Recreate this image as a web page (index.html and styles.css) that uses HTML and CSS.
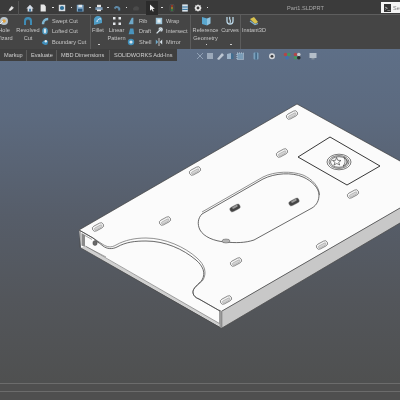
FILE: index.html
```html
<!DOCTYPE html>
<html lang="en">
<head>
<meta charset="utf-8">
<title>Part1.SLDPRT</title>
<link rel="stylesheet" href="styles.css">
</head>
<body>
<div class="app">
  <header class="topbar">
    <div class="quick">
      <svg class="qi pin" viewBox="0 0 10 10"><path d="M3 7 L6 3 L8 5 L4.5 8 Z M2 9 L4 7" fill="#e8e8e8" stroke="#e8e8e8"/></svg>
      <span class="qsep"></span>
      <svg class="qi home" viewBox="0 0 10 10"><path d="M5 1 L9.5 5.5 H8 V9.5 H2 V5.5 H.5 Z" fill="#d5dce6"/><rect x="4" y="6" width="2" height="3.5" fill="#2f6f9c"/></svg>
      <svg class="qi new" viewBox="0 0 10 10"><path d="M2 .5 H6.5 L8.5 3 V9.5 H2 Z" fill="#e6e6e6"/></svg>
      <i class="dot d1"></i>
      <svg class="qi open" viewBox="0 0 10 10"><rect x="1" y="1" width="8" height="8" fill="#d8dde2"/><circle cx="5" cy="5" r="2.6" fill="#2d6f98"/></svg>
      <i class="dot d2"></i>
      <svg class="qi save" viewBox="0 0 10 10"><rect x="1" y="1" width="8.5" height="8.5" fill="#7fa6c6"/><rect x="3" y="1" width="4.5" height="3" fill="#dfe6ec"/><rect x="2.5" y="6" width="5.5" height="3.5" fill="#2b5578"/></svg>
      <i class="dot d3"></i>
      <svg class="qi print" viewBox="0 0 10 10"><rect x="2.5" y="1" width="5" height="3" fill="#e4e4e4"/><rect x=".5" y="4" width="9" height="3.5" fill="#7d9cb8"/><rect x="2.5" y="7" width="5" height="2" fill="#e4e4e4"/></svg>
      <i class="dot d4"></i>
      <svg class="qi undo" viewBox="0 0 10 10"><path d="M1 5 C3 1 7 2 9 5 V8 H6.5 V6 C5 4.5 3.5 5 3 6.5 Z" fill="#5f8aa8"/></svg>
      <i class="dot d5"></i>
      <svg class="qi redo" viewBox="0 0 10 10"><path d="M1 6 C3 2 7 2 9 5 L8 8 H2 Z" fill="#4b4b4b"/></svg>
      <span class="sel"><svg class="qi cursor" viewBox="0 0 10 10"><path d="M2.5 .5 V8.5 L4.5 6.6 L6 9.5 L7.2 9 L5.8 6.2 L8.5 6 Z" fill="#f0f0f0"/></svg></span>
      <i class="dot d6"></i>
      <svg class="qi light" viewBox="0 0 10 10"><rect x="2.8" y=".5" width="4.4" height="9" rx="1.5" fill="#222" stroke="#888" stroke-width=".5"/><circle cx="5" cy="2.5" r="1.1" fill="#c8402c"/><circle cx="5" cy="5" r="1.1" fill="#c8a030"/><circle cx="5" cy="7.5" r="1.1" fill="#3fa050"/></svg>
      <svg class="qi props" viewBox="0 0 10 10"><rect x="1.5" y=".5" width="7" height="9" fill="#d8e2ea"/><rect x="1.5" y="3" width="7" height="1.5" fill="#3b7aa5"/><rect x="1.5" y="6" width="7" height="1.5" fill="#3b7aa5"/></svg>
      <svg class="qi gear" viewBox="0 0 10 10"><circle cx="5" cy="5" r="2.8" fill="none" stroke="#ededed" stroke-width="2"/><path d="M5 .5 V2 M5 8 V9.5 M.5 5 H2 M8 5 H9.5 M1.8 1.8 L3 3 M7 7 L8.2 8.2 M8.2 1.8 L7 3 M3 7 L1.8 8.2" stroke="#ededed"/></svg>
      <i class="dot d7"></i>
    </div>
    <div class="title">Part1.SLDPRT</div>
    <div class="search"><span class="sicon">&gt;_</span><span class="stext">Se</span></div>
  </header>

  <section class="ribbon">
    <div class="group group-a">
      <div class="col col-hole">
        <svg class="big" viewBox="0 0 10 10"><circle cx="5" cy="5" r="4" fill="#b9c4cc"/><circle cx="5" cy="5" r="1.8" fill="#e0a23c"/><path d="M1 8 L4 5" stroke="#eee"/></svg>
        <span>Hole<br>Wizard</span>
      </div>
      <div class="col col-rev">
        <svg class="big" viewBox="0 0 10 10"><path d="M1 9 V5 A4 4 0 0 1 9 5 V9 H7 V5.5 A2 2 0 0 0 3 5.5 V9 Z" fill="#3f8cb5"/></svg>
        <span>Revolved<br>Cut</span>
      </div>
      <div class="stack stack-cut">
        <div class="row"><svg class="sm" viewBox="0 0 10 10"><path d="M1 9 C1 5 4 1 9 1 V4 C6 4 4 6 4 9 Z" fill="#7fb6d2"/></svg><span>Swept Cut</span></div>
        <div class="row"><svg class="sm" viewBox="0 0 10 10"><ellipse cx="5" cy="5" rx="3.5" ry="4.5" fill="#4e9ac2"/><ellipse cx="5" cy="5" rx="1.5" ry="3" fill="#d9e6ee"/></svg><span>Lofted Cut</span></div>
        <div class="row"><svg class="sm" viewBox="0 0 10 10"><path d="M1 6 C3 2 7 2 9 4 L8 8 C6 9 3 9 1 6 Z" fill="#3e8fbd"/><circle cx="6" cy="4" r="1.5" fill="#e6eef3"/></svg><span>Boundary Cut</span></div>
      </div>
    </div>
    <div class="group group-b">
      <div class="col col-fillet">
        <svg class="big" viewBox="0 0 10 10"><path d="M1 9 V5 A4 4 0 0 1 9 3 V7 Z" fill="#4f9cc4"/><path d="M4 6 A3 3 0 0 1 8 3" stroke="#eef" fill="none"/></svg>
        <span>Fillet</span>
        <i class="caret"></i>
      </div>
      <div class="col col-pattern">
        <svg class="big" viewBox="0 0 10 10"><g fill="#e4e8ec"><rect x="1" y="1" width="2.5" height="2.5"/><rect x="6.5" y="1" width="2.5" height="2.5"/><rect x="1" y="6.5" width="2.5" height="2.5"/><rect x="6.5" y="6.5" width="2.5" height="2.5"/></g></svg>
        <span>Linear<br>Pattern</span>
      </div>
      <div class="stack stack-rib">
        <div class="row"><svg class="sm" viewBox="0 0 10 10"><path d="M2 9 L6 1 H8 V9 Z" fill="#6fa8c8"/></svg><span>Rib</span></div>
        <div class="row"><svg class="sm" viewBox="0 0 10 10"><path d="M2 9 L4 2 H8 L9 9 Z" fill="#4a94bd"/></svg><span>Draft</span></div>
        <div class="row"><svg class="sm" viewBox="0 0 10 10"><circle cx="5" cy="5" r="4" fill="#3f8fba"/><circle cx="5" cy="5" r="2" fill="#d7e6ee"/></svg><span>Shell</span></div>
      </div>
      <div class="stack stack-wrap">
        <div class="row"><svg class="sm" viewBox="0 0 10 10"><rect x="1" y="1" width="8" height="8" fill="#9ec4d8"/><rect x="3" y="3" width="4" height="4" fill="#e6eef2"/></svg><span>Wrap</span></div>
        <div class="row"><svg class="sm" viewBox="0 0 10 10"><path d="M2 8 L5 5 L8 2 M5 3 A2 2 0 1 1 7 5" stroke="#d8e4ec" stroke-width="1.6" fill="none"/></svg><span>Intersect</span></div>
        <div class="row"><svg class="sm" viewBox="0 0 10 10"><path d="M5 0 V10" stroke="#ddd"/><path d="M1 2 L4 5 L1 8 Z" fill="#6fa8c8"/><path d="M9 2 L6 5 L9 8 Z" fill="#d8e4ec"/></svg><span>Mirror</span></div>
      </div>
    </div>
    <div class="group group-c">
      <div class="col col-ref">
        <svg class="big" viewBox="0 0 10 10"><path d="M1 1 L6 2.5 V9.5 L1 8 Z" fill="#5aa7cf"/><path d="M6 2.5 L9.5 1 V7.5 L6 9.5 Z" fill="#8fc3df"/></svg>
        <span>Reference<br>Geometry</span>
        <i class="caret"></i>
      </div>
      <div class="col col-curves">
        <svg class="big" viewBox="0 0 10 10"><path d="M2 1 V5 C2 9 8 9 8 5 V1 M5 1 C3 3 7 4 5 7" fill="none" stroke="#bcd8e8" stroke-width="1.3"/></svg>
        <span>Curves</span>
        <i class="caret"></i>
      </div>
    </div>
    <div class="group group-d">
      <div class="col col-i3d">
        <svg class="big" viewBox="0 0 10 10"><path d="M1 3 L5 1 L9 6 L6 8 Z" fill="#d8c24e"/><path d="M1 5 L6 8.5 L9 7.5" stroke="#7fb0cf" fill="none" stroke-width="1.2"/></svg>
        <span>Instant3D</span>
      </div>
    </div>
  </section>

  <main class="stage">
    <nav class="tabrow">
      <div class="tabs">
        <span class="tab tab-1">Markup</span>
        <span class="tab tab-2">Evaluate</span>
        <span class="tab tab-3">MBD Dimensions</span>
        <span class="tab tab-4">SOLIDWORKS Add-Ins</span>
      </div>
      <div class="viewtools">
        <svg class="vi v1" viewBox="0 0 8 8"><path d="M1 1 L7 7 M7 1 L1 7" stroke="#99a9bc"/></svg>
        <svg class="vi" viewBox="0 0 8 8"><rect x="1" y="1" width="6" height="6" fill="#a6b4c4"/></svg>
        <svg class="vi" viewBox="0 0 8 8"><path d="M1 7 L6 1 L8 3 L3 8 Z" fill="#cdd6e0"/></svg>
        <svg class="vi" viewBox="0 0 8 8"><path d="M1 2 L5 1 V7 L1 7 Z" fill="#a9c0d4"/><path d="M5 1 L7.5 2 V7 L5 7 Z" fill="#3d6f93"/></svg>
        <svg class="vi" viewBox="0 0 8 8"><rect x="1" y="1" width="6.5" height="6.5" fill="#7fa5c0" stroke="#cfdbe6" stroke-dasharray="1 1"/></svg>
        <svg class="vi v6" viewBox="0 0 8 8"><rect x="1.5" y=".5" width="5" height="7" rx="1" fill="#7fa9c6"/><rect x="3.5" y=".5" width="1.2" height="7" fill="#27516f"/></svg>
        <svg class="vi v7" viewBox="0 0 8 8"><circle cx="4" cy="4.3" r="3" fill="#e8e8e8"/><circle cx="4" cy="4.3" r="1.4" fill="#333"/></svg>
        <svg class="vi v8" viewBox="0 0 8 8"><circle cx="2.5" cy="2.5" r="1.8" fill="#c04040"/><circle cx="5.8" cy="2.5" r="1.8" fill="#3f9c58"/><circle cx="4" cy="5.8" r="1.8" fill="#3a72b8"/></svg>
        <svg class="vi v9" viewBox="0 0 8 8"><circle cx="2.5" cy="2.5" r="1.8" fill="#c04040"/><circle cx="5.8" cy="2.5" r="1.8" fill="#d9d9d9"/><circle cx="2.5" cy="5.8" r="1.8" fill="#3f9c58"/><circle cx="5.8" cy="5.8" r="1.8" fill="#222"/></svg>
        <svg class="vi v10" viewBox="0 0 8 8"><rect x=".5" y="1" width="7" height="5" fill="#c4ccd4"/><rect x="2.5" y="6" width="3" height="1.5" fill="#8a95a0"/></svg>
      </div>
    </nav>
    <svg class="model" viewBox="0 62 400 321">
      <defs>
        <g id="slot">
          <rect x="-6" y="-2.700" width="12" height="5.400" rx="2.700" fill="#f4f4f4" stroke="#555" stroke-width=".6"/>
          <rect x="-4.200" y="-.6" width="8.400" height="2.400" rx="1.200" fill="#d4d4d4" stroke="#888" stroke-width=".4"/>
        </g>
        <g id="hole">
          <rect x="-5.500" y="-2.500" width="11" height="5" rx="2.500" fill="#454545" stroke="#777" stroke-width=".4"/>
          <rect x="-2.500" y="-2" width="6" height="2" rx="1" fill="#9a9a9a"/>
        </g>
      </defs>

      <path class="plate" d="M79 230 L297 104 L400 161 V208 L222 311 L222 328 L81 248 Z"/>
      <path class="edge-light" d="M79 230 L297 104 L400 161"/>
      <path class="side" d="M222 311 L400 208 V223 L222 328 Z"/>
      <path class="edge" d="M222 311 L400 208"/>
      <path class="edge" d="M222 328 L400 223"/>
      <path class="post" d="M219.500 310 L222 311.500 V328 L219.500 326.500 Z"/>

      <path class="inner" d="M81.500 233 L85 235 V247 L81.500 245.500 Z"/>
      <path class="thin" d="M85 235.500 L92 239.500 M85 246 L106 257"/>
      <path class="edge" d="M80 231 V247.500"/>
      <path class="strip" d="M81 247.500 L222 328 L219.500 326 V323.500 L85 246.500 Z"/>
      <path class="thin" d="M86 246.500 L219.500 323.500"/>
      <path class="edge" d="M81 248 L220 327.500"/>
      <ellipse class="screw" cx="95" cy="243" rx="2.200" ry="2.500"/>
      <path class="thin" d="M95 241 L99 243"/>

      <path class="cutband" d="M79 230 L93 238 L103 244.500 C107 247 111 248 116 245 C125 240 135 238 146 238 C165 238 185 247 197 258 C205 265 207 273 203 280 C200 284 192 288 193 293 C193.500 296 196 298 199 299 L220 311"/>
      <path class="cutline" d="M79 230 L93 238 L103 246 C107 249 112 249.500 117 247 C126 242 135 241 146 241 C165 241 183 249 196 260 C203 266 206 273 202 280 C199 284 192 288 193 293 C193.500 296 196 298 199 299 L220 311"/>

      <path class="oband" d="M202 212 L263 177 C275 171 292 171 303 175 C312 179 319 186 319.500 195"/>
      <path class="oline" d="M202 214 L263 179 C275 173 292 172 303 177 C312 181 319 188 319 195 C319 200 317 205 312 208 L254 240 C245 243 236 243 225 242 C214 241 204 237 200 230 C197 224 198 218 202 214 Z"/>
      <ellipse class="half" cx="226" cy="241" rx="4" ry="2"/>

      <use href="#slot" transform="translate(292 115) rotate(-28)"/>
      <use href="#slot" transform="translate(282 153) rotate(-28)"/>
      <use href="#slot" transform="translate(353 194) rotate(-28)"/>
      <use href="#slot" transform="translate(195 171) rotate(-28)"/>
      <use href="#slot" transform="translate(165 221) rotate(-28)"/>
      <use href="#slot" transform="translate(98 227) rotate(-28)"/>
      <use href="#slot" transform="translate(322 245) rotate(-28)"/>
      <use href="#slot" transform="translate(236 262) rotate(-28)"/>
      <use href="#slot" transform="translate(226 300) rotate(-28)"/>
      <use href="#hole" transform="translate(235 208) rotate(-28)"/>
      <use href="#hole" transform="translate(294 202) rotate(-28)"/>

      <path class="pocket" d="M330 137 L380 166 L347 185 L298 157 Z"/>
      <g class="emblem">
        <ellipse cx="339" cy="162" rx="12" ry="7.800"/>
        <ellipse cx="339" cy="162" rx="10" ry="6.400"/>
        <ellipse cx="339" cy="162" rx="8.500" ry="5.300"/>
        <path d="M336.500 157.500 L337.800 160.300 L341 160.500 L338.700 162.300 L339.700 165 L336.800 163.500 L334 165 L335 162.300 L332.500 160.500 L335.500 160.300 Z"/>
        <path d="M344 157.500 C348 160 348 164 343 166 C345.500 163.500 345.500 160 344 157.500 Z"/>
      </g>
    </svg>
  </main>

  <footer class="status"><div class="strip1"></div><div class="strip2"></div></footer>
</div>
</body>
</html>
```
FILE: styles.css
```css
* { box-sizing: border-box; }
html, body { margin: 0; height: 100%; }
body { background: #4f4f4f; font-family: "Liberation Sans", Arimo, sans-serif; color: #c6c6c6; overflow: hidden; }
.app { width: 400px; height: 400px; display: flex; flex-direction: column; filter: blur(.35px); }

.topbar { height: 15px; flex: none; display: flex; align-items: center; background: #3b3b3b; border-bottom: 1px solid #5e5e5e; padding-top: 1px; }
.quick { display: flex; align-items: center; height: 14px; padding-left: 7px; }
.qi { width: 8px; height: 8px; flex: none; display: block; }
.qsep { width: 1px; height: 14px; background: #555; margin: 0 0 0 3px; }
.home { margin-left: 7px; }
.new { margin-left: 5px; }
.dot { width: 1.5px; height: 1.5px; background: #ddd; flex: none; display: block; }
.d1 { margin-left: 5px; }
.open { margin-left: 4px; }
.d2 { margin-left: 5px; }
.save { margin-left: 4px; }
.d3 { margin-left: 5px; }
.print { margin-left: 4.500px; }
.d4 { margin-left: 4px; }
.undo { margin-left: 4px; }
.d5 { margin-left: 5px; }
.redo { margin-left: 5px; }
.sel { width: 12px; height: 14px; margin-left: 6px; background: #2b2b2b; display: flex; align-items: center; justify-content: center; }
.d6 { margin-left: 3px; }
.light { margin-left: 5px; }
.props { margin-left: 5px; }
.gear { margin-left: 5px; }
.d7 { margin-left: 5px; }
.title { flex: 1; text-align: center; font-size: 5.600px; color: #a8a8a8; padding-left: 22px; }
.search { width: 19px; height: 11px; background: #f4f4f4; display: flex; align-items: center; gap: 2px; padding-left: 3px; flex: none; overflow: hidden; font-size: 5.500px; }
.sicon { width: 7px; height: 8px; background: #333; color: #eee; font-size: 5px; line-height: 8px; text-align: center; flex: none; }
.stext { color: #777; }

.ribbon { height: 34px; flex: none; display: flex; background: #454545; overflow: hidden; font-size: 5.600px; line-height: 8px; }
.group { display: flex; height: 100%; border-right: 1px solid #5c5c5c; flex: none; position: relative; }
.group-a { margin-left: -9px; width: 100px; }
.group-b { width: 100px; }
.group-c { width: 50px; }
.group-d { border-right: 0; }
.col { display: flex; flex-direction: column; align-items: center; text-align: center; padding-top: 1px; flex: none; position: relative; }
.col span { display: block; }
.big { width: 10px; height: 10px; display: block; flex: none; margin-bottom: -.5px; }
.col-hole { width: 26px; }
.col-rev { width: 22px; }
.stack { display: flex; flex-direction: column; padding-top: 2px; gap: 2.400px; flex: none; }
.row { display: flex; align-items: center; height: 8px; gap: 3px; white-space: nowrap; }
.sm { width: 8px; height: 8px; flex: none; display: block; }
.stack-cut { margin-left: 2px; }
.col-fillet { width: 14px; }
.col-pattern { width: 23px; }
.stack-rib { margin-left: -1px; width: 28px; }
.stack-rib .row { gap: 4px; }
.col-ref { width: 29px; }
.col-curves { width: 20px; }
.col-i3d { width: 26px; }
.caret { position: absolute; left: 50%; top: 28.500px; width: 1.500px; height: 1.500px; background: #cfcfcf; }

.stage { flex: 1; min-height: 0; display: flex; flex-direction: column; background: linear-gradient(180deg, #5e6f87 0%, #5c6a7f 20%, #565d69 50%, #53565b 75%, #4f5050 100%); }
.tabrow { height: 13px; flex: none; display: flex; }
.tabs { width: 177px; height: 12px; flex: none; background: #3f3f3f; display: flex; align-items: center; font-size: 5.600px; color: #cfcfcf; white-space: nowrap; }
.tab { height: 11px; line-height: 11px; border-right: 1px solid #5a5a5a; padding-left: 4px; flex: none; }
.tab-1 { width: 27px; }
.tab-2 { width: 30px; }
.tab-3 { width: 53px; }
.tab-4 { width: 65px; border-right: 0; }
.viewtools { display: flex; align-items: center; height: 13px; padding-left: 19px; gap: 2px; padding-top: 1px; opacity: .85; }
.vi { width: 8px; height: 8px; flex: none; display: block; }
.v6 { margin-left: 6px; }
.v7 { margin-left: 6px; }
.v8 { margin-left: 5px; }
.v10 { margin-left: 6px; }

.model { display: block; width: 400px; height: 321px; flex: none; }
.plate { fill: #fbfbfb; }
.edge-light { fill: none; stroke: #3e3e3e; stroke-width: .7; }
.side { fill: #c8c8c8; }
.edge { fill: none; stroke: #4c4c4c; stroke-width: .8; }
.thin { fill: none; stroke: #666; stroke-width: .6; }
.post { fill: #9b9b9b; stroke: #555; stroke-width: .4; }
.inner { fill: #8a8a8a; }
.strip { fill: #d0d0d0; }
.screw { fill: #6a6a6a; stroke: #333; stroke-width: .4; }
.cutband { fill: none; stroke: #777; stroke-width: .8; }
.cutline { fill: none; stroke: #444; stroke-width: .8; }
.oband { fill: none; stroke: #777; stroke-width: .8; }
.oline { fill: none; stroke: #444; stroke-width: .8; }
.half { fill: #b5b5b5; stroke: #555; stroke-width: .5; }
.pocket { fill: #fbfbfb; stroke: #222; stroke-width: .9; }
.emblem ellipse { fill: none; stroke: #444; stroke-width: .7; }
.emblem path { fill: none; stroke: #333; stroke-width: .6; }

.status { height: 17px; flex: none; display: flex; flex-direction: column; background: #4f4f4f; }
.strip1 { height: 8px; border-top: 1px solid #6c6c6c; }
.strip2 { height: 9px; border-top: 1px solid #6c6c6c; }
```
